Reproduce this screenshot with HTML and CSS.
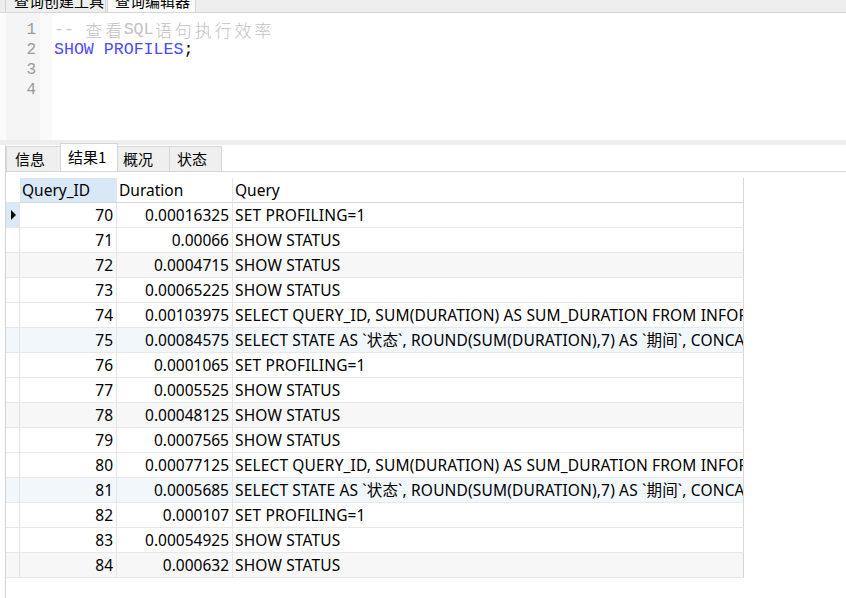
FILE: index.html
```html
<!DOCTYPE html>
<html>
<head>
<meta charset="utf-8">
<link rel="stylesheet" href="styles.css">
</head>
<body>
<div class="topbar">
  <div class="toptabs">
    <div class="ttab">查询创建工具</div>
    <div class="ttab active">查询编辑器</div>
  </div>
</div>
<div class="editor">
  <div class="margin"></div>
  <div class="gutter">
    <div class="ln">1</div>
    <div class="ln">2</div>
    <div class="ln">3</div>
    <div class="ln">4</div>
  </div>
  <div class="fold"></div>
  <div class="code">
    <div class="line comment">-- <span class="w">查</span><span class="w">看</span>SQL<span class="w">语</span><span class="w">句</span><span class="w">执</span><span class="w">行</span><span class="w">效</span><span class="w">率</span></div>
    <div class="line"><span class="kw">SHOW PROFILES</span>;</div>
    <div class="line"></div>
    <div class="line"></div>
  </div>
</div>
<div class="splitter"></div>
<div class="results">
  <div class="rtabs">
    <div class="rtab">信息</div>
    <div class="rtab active">结果1</div>
    <div class="rtab narrow">概况</div>
    <div class="rtab last">状态</div>
  </div>
  <table class="grid">
    <colgroup>
      <col class="c-ind"><col class="c-id"><col class="c-dur"><col class="c-q">
    </colgroup>
    <thead>
      <tr>
        <th class="ind"></th>
        <th class="sel">Query_ID</th>
        <th>Duration</th>
        <th>Query</th>
      </tr>
    </thead>
    <tbody>
      <tr><td class="ind cur"><span class="arrow"></span></td><td class="num">70</td><td class="num">0.00016325</td><td class="q">SET PROFILING=1</td></tr>
      <tr><td class="ind"></td><td class="num">71</td><td class="num">0.00066</td><td class="q">SHOW STATUS</td></tr>
      <tr class="gray"><td class="ind"></td><td class="num">72</td><td class="num">0.0004715</td><td class="q">SHOW STATUS</td></tr>
      <tr><td class="ind"></td><td class="num">73</td><td class="num">0.00065225</td><td class="q">SHOW STATUS</td></tr>
      <tr><td class="ind"></td><td class="num">74</td><td class="num">0.00103975</td><td class="q">SELECT QUERY_ID, SUM(DURATION) AS SUM_DURATION FROM INFORMATION_SCHEMA.PROFILING GROUP BY QUERY_ID</td></tr>
      <tr class="blue"><td class="ind"></td><td class="num">75</td><td class="num">0.00084575</td><td class="q">SELECT STATE AS `状态`, ROUND(SUM(DURATION),7) AS `期间`, CONCAT(ROUND(SUM(DURATION)/0.000847*100,3), '%') AS `百分比`</td></tr>
      <tr><td class="ind"></td><td class="num">76</td><td class="num">0.0001065</td><td class="q">SET PROFILING=1</td></tr>
      <tr><td class="ind"></td><td class="num">77</td><td class="num">0.0005525</td><td class="q">SHOW STATUS</td></tr>
      <tr class="gray"><td class="ind"></td><td class="num">78</td><td class="num">0.00048125</td><td class="q">SHOW STATUS</td></tr>
      <tr><td class="ind"></td><td class="num">79</td><td class="num">0.0007565</td><td class="q">SHOW STATUS</td></tr>
      <tr><td class="ind"></td><td class="num">80</td><td class="num">0.00077125</td><td class="q">SELECT QUERY_ID, SUM(DURATION) AS SUM_DURATION FROM INFORMATION_SCHEMA.PROFILING GROUP BY QUERY_ID</td></tr>
      <tr class="blue"><td class="ind"></td><td class="num">81</td><td class="num">0.0005685</td><td class="q">SELECT STATE AS `状态`, ROUND(SUM(DURATION),7) AS `期间`, CONCAT(ROUND(SUM(DURATION)/0.000569*100,3), '%') AS `百分比`</td></tr>
      <tr><td class="ind"></td><td class="num">82</td><td class="num">0.000107</td><td class="q">SET PROFILING=1</td></tr>
      <tr><td class="ind"></td><td class="num">83</td><td class="num">0.00054925</td><td class="q">SHOW STATUS</td></tr>
      <tr class="gray"><td class="ind"></td><td class="num">84</td><td class="num">0.000632</td><td class="q">SHOW STATUS</td></tr>
    </tbody>
  </table>
</div>
</body>
</html>
```

FILE: styles.css
```css
html, body {
  margin: 0;
  padding: 0;
  background: #ffffff;
  overflow: hidden;
}
body {
  width: 846px;
  height: 598px;
  font-family: "Noto Sans", "Noto Sans CJK SC", sans-serif;
  color: #000;
}

/* top tab bar (clipped) */
.topbar {
  height: 12px;
  background: #eeeeee;
  border-bottom: 1px solid #d6d6d6;
  overflow: hidden;
}
.toptabs {
  display: flex;
  margin-top: -12px;
  padding-left: 5px;
}
.ttab {
  height: 24px;
  line-height: 24px;
  font-size: 15px;
  padding: 0 1px 0 8px;
  background: #eeeeee;
  border: 1px solid #d4d4d4;
  font-family: "Noto Sans CJK SC", sans-serif;
}
.ttab.active {
  background: #fafafa;
  margin-left: 1px;
  padding: 0 5px 0 7px;
}

/* editor */
.editor {
  display: flex;
  height: 127px;
  background: #fff;
}
.margin {
  width: 6px;
  background: #fcfcfc;
}
.gutter {
  width: 30px;
  padding: 7px 4px 0 0;
  background: #f5f5f5;
  text-align: right;
  color: #9a9a9a;
  font-family: "Liberation Mono", monospace;
  font-size: 16px;
}
.ln {
  height: 20px;
  line-height: 20px;
}
.fold {
  width: 12px;
  background: #fafafa;
}
.code {
  padding: 7px 0 0 2px;
  font-family: "Liberation Mono", "Noto Sans CJK SC", monospace;
  font-size: 16.6px;
}
.line {
  height: 20px;
  line-height: 20px;
  white-space: pre;
}
.comment {
  color: #c2c2c2;
}
.w {
  display: inline-block;
  width: 19.9px;
  text-align: center;
  vertical-align: top;
  font-family: "Noto Sans CJK SC", sans-serif;
  font-size: 17px;
  font-weight: 300;
  line-height: 20px;
}
.kw {
  color: #4a4aff;
}

.splitter {
  height: 5px;
  background: #eeeeee;
}

/* results */
.results {
  margin-left: 5px;
  border-left: 1px solid #d4d4d4;
  height: 453px;
}
.rtabs {
  display: flex;
  align-items: flex-end;
  height: 26px;
  border-bottom: 1px solid #d6d6d6;
}
.rtab {
  box-sizing: border-box;
  height: 25px;
  line-height: 24px;
  width: 55px;
  padding-left: 8px;
  font-size: 15px;
  font-family: "Noto Sans CJK SC", sans-serif;
  background: #efefef;
  border: 1px solid #d6d6d6;
  border-bottom: none;
  margin-right: -1px;
}
.rtab.active {
  height: 28px;
  line-height: 26px;
  width: 58px;
  padding-left: 7px;
  background: #ffffff;
  margin-top: -2px;
}
.rtab.narrow {
  width: 53px;
  padding-left: 5px;
}
.rtab.last {
  width: 53px;
  padding-left: 7px;
}

.grid {
  margin-top: 6px;
  border-collapse: separate;
  border-spacing: 0;
  table-layout: fixed;
  width: 738px;
  font-size: 15.5px;
}
.c-ind { width: 14px; }
.c-id { width: 97px; }
.c-dur { width: 116px; }
.c-q { width: 511px; }

.grid th, .grid td {
  box-sizing: border-box;
  height: 25px;
  padding: 0 2px;
  border-right: 1px solid #e6e6e6;
  border-bottom: 1px solid #e8e8e8;
  white-space: nowrap;
  overflow: hidden;
  font-weight: normal;
  text-align: left;
  line-height: 24px;
}
.grid th {
  border-bottom: 1px solid #d6d6d6;
}
.grid th:last-child, .grid td:last-child {
  border-right: 1px solid #d6d6d6;
}
.grid th.ind {
  border-right: none;
  border-bottom-color: #e8e8e8;
}
.grid th.sel {
  background: #d9e8f7;
}
.grid td.ind {
  padding: 0;
  border-right: 1px solid #e2e2e2;
}
.grid td.cur {
  background: #dbe8f5;
}
.arrow {
  display: block;
  width: 0;
  height: 0;
  margin-left: 5px;
  border-left: 5px solid #000;
  border-top: 5px solid transparent;
  border-bottom: 5px solid transparent;
}
.grid td.num {
  text-align: right;
  padding-right: 3px;
}
.grid td.q {
  letter-spacing: 0.15px;
}
.grid tr.gray td {
  background: #f7f7f7;
}
.grid tr.blue td {
  background: #f2f7fc;
}
```
